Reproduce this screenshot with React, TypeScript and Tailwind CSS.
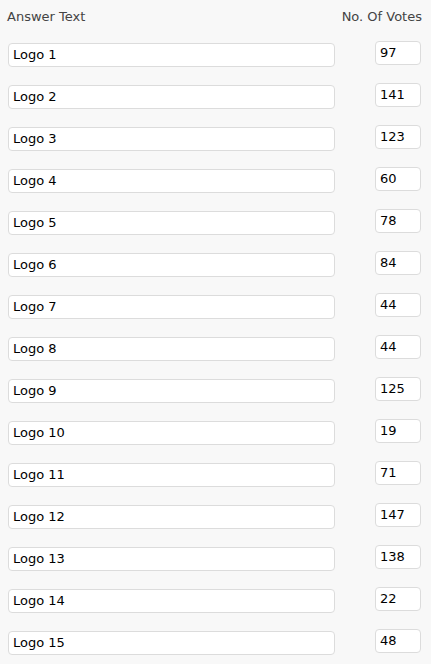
import React from "react";

const rows: [string, number][] = [
  ["Logo 1", 97],
  ["Logo 2", 141],
  ["Logo 3", 123],
  ["Logo 4", 60],
  ["Logo 5", 78],
  ["Logo 6", 84],
  ["Logo 7", 44],
  ["Logo 8", 44],
  ["Logo 9", 125],
  ["Logo 10", 19],
  ["Logo 11", 71],
  ["Logo 12", 147],
  ["Logo 13", 138],
  ["Logo 14", 22],
  ["Logo 15", 48],
];

export default function App() {
  return (
    <div
      className="min-h-[664px] w-[431px] bg-[#f8f8f8] text-[13px]"
      style={{ fontFamily: "Verdana, 'DejaVu Sans', sans-serif" }}
    >
      <div className="flex justify-between pl-[7px] pr-[9px] pt-[7px] h-[41px] text-[#444]">
        <span>Answer Text</span>
        <span>No. Of Votes</span>
      </div>
      <div className="flex flex-col">
        {rows.map(([label, votes]) => (
          <div key={label} className="flex items-start h-[42px]">
            <div className="ml-[8px] mt-[2px] w-[327px] h-[24px] bg-white border border-[#dcdcdc] rounded-[4px] flex items-center pl-[4px] text-black">
              {label}
            </div>
            <div className="ml-[40px] w-[46px] h-[24px] bg-white border border-[#dcdcdc] rounded-[4px] flex items-center pl-[4px] text-black">
              {votes}
            </div>
          </div>
        ))}
      </div>
    </div>
  );
}
